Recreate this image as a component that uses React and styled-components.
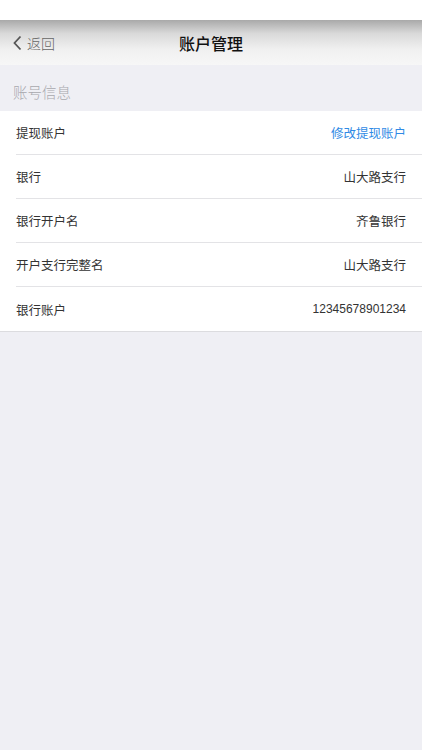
import React from 'react'
import styled, { createGlobalStyle } from 'styled-components'

const GlobalStyle = createGlobalStyle`
  html, body {
    margin: 0;
    padding: 0;
    background: #efeff4;
  }
  body {
    font-family: "Noto Sans CJK SC", "Liberation Sans", sans-serif;
  }
`

const Page = styled.div`
  width: 100%;
  min-height: 750px;
  display: flex;
  flex-direction: column;
  background: #efeff4;
`

const StatusBar = styled.div`
  height: 20px;
  background: #ffffff;
`

const NavBar = styled.div`
  height: 45px;
  display: grid;
  grid-template-columns: 1fr auto 1fr;
  align-items: center;
  background: linear-gradient(#a9a9a9 0%, #d9d9d9 30%, #f0f0f0 65%, #f7f7f7 100%);
`

const BackButton = styled.div`
  display: flex;
  align-items: center;
  gap: 5px;
  padding-left: 12px;
  color: #666666;
  font-size: 14px;
  font-weight: 300;
`

const Title = styled.h1`
  margin: 0;
  font-size: 16px;
  font-weight: 500;
  color: #111111;
`

const SectionHeader = styled.div`
  height: 46px;
  box-sizing: border-box;
  padding: 7px 0 0 13px;
  display: flex;
  align-items: center;
  color: #a8a8ad;
  font-size: 14.5px;
  font-weight: 300;
`

const List = styled.div`
  background: #ffffff;
  border-bottom: 1px solid #dcdcdf;
`

const Row = styled.div`
  height: 44px;
  margin-left: 16px;
  padding-right: 16px;
  display: flex;
  align-items: center;
  justify-content: space-between;
  font-size: 12.5px;
  color: #333333;
  border-bottom: ${p => (p.last ? 'none' : '1px solid #e3e3e6')};
  box-sizing: border-box;
`

const Value = styled.span`
  color: ${p => (p.link ? '#2f8ae5' : '#333333')};
  font-family: ${p => (p.num ? '"Liberation Sans", sans-serif' : 'inherit')};
  font-size: ${p => (p.num ? '12px' : '12.5px')};
`

const rows = [
  { label: '提现账户', value: '修改提现账户', link: true },
  { label: '银行', value: '山大路支行' },
  { label: '银行开户名', value: '齐鲁银行' },
  { label: '开户支行完整名', value: '山大路支行' },
  { label: '银行账户', value: '12345678901234', num: true },
]

const App = () => (
  <Page>
    <GlobalStyle />
    <StatusBar />
    <NavBar>
      <BackButton>
        <svg width="10" height="16" viewBox="0 0 10 16">
          <path d="M8.5 1.5 L2.5 8 L8.5 14.5" fill="none" stroke="#555" strokeWidth="1.8" />
        </svg>
        返回
      </BackButton>
      <Title>账户管理</Title>
      <div />
    </NavBar>
    <SectionHeader>账号信息</SectionHeader>
    <List>
      {rows.map((row, i) => (
        <Row key={row.label} last={i === rows.length - 1}>
          <span>{row.label}</span>
          <Value link={row.link} num={row.num}>{row.value}</Value>
        </Row>
      ))}
    </List>
  </Page>
)

export default App
